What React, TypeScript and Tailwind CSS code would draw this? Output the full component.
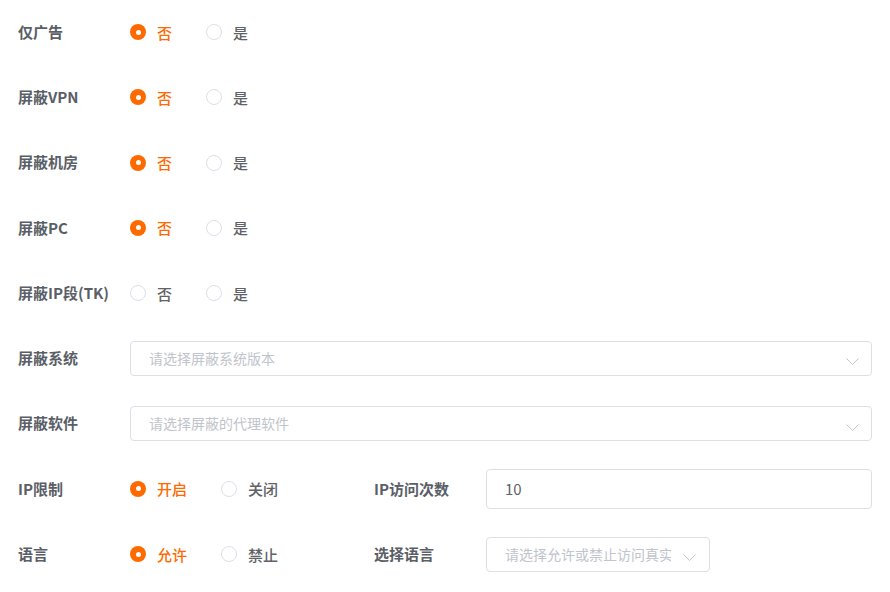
import React from "react";

const font = { fontFamily: '"Noto Sans CJK SC", "Noto Sans", sans-serif' };

function Radio({ label, checked }: { label: string; checked?: boolean }) {
  return (
    <div className="flex items-center mr-[34px]">
      {checked ? (
        <span className="w-[16px] h-[16px] rounded-full bg-[#ff6a00] flex items-center justify-center">
          <span className="w-[5px] h-[5px] rounded-full bg-white" />
        </span>
      ) : (
        <span className="w-[16px] h-[16px] rounded-full border border-[#dcdfe6] bg-white" />
      )}
      <span
        className={`ml-[11px] text-[15px] font-medium leading-none ${checked ? "text-[#ff6a00]" : "text-[#606266]"}`}
      >
        {label}
      </span>
    </div>
  );
}

function Chevron() {
  return (
    <svg width="13" height="7" viewBox="0 0 13 7" fill="none" className="shrink-0 mt-[7px]">
      <path d="M0.5 0.5l6 6 6-6" stroke="#c0c4cc" strokeWidth="1" />
    </svg>
  );
}

function Label({ children }: { children: React.ReactNode }) {
  return (
    <div className="w-[112px] shrink-0 text-[15px] font-bold text-[#5a5e66] whitespace-nowrap">
      {children}
    </div>
  );
}

export default function App() {
  return (
    <div className="bg-white w-[890px] h-[592px] overflow-hidden" style={font}>
      <div className="flex flex-col gap-[25.25px] pt-[12px] pl-[18px] w-[872px]">
        {[
          ["仅广告", true],
          ["屏蔽VPN", true],
          ["屏蔽机房", true],
          ["屏蔽PC", true],
          ["屏蔽IP段(TK)", false],
        ].map(([l, c]) => (
          <div key={l as string} className="flex items-center h-[40px]">
            <Label>{l as string}</Label>
            <Radio label="否" checked={c as boolean} />
            <Radio label="是" />
          </div>
        ))}
        <div className="flex items-center h-[40px]">
          <Label>屏蔽系统</Label>
          <div className="flex-1 h-[35px] border border-[#dcdfe6] rounded-[4px] flex items-center pl-[18px] pr-[12px]">
            <span className="flex-1 text-[14px] text-[#c0c4cc]">请选择屏蔽系统版本</span>
            <Chevron />
          </div>
        </div>
        <div className="flex items-center h-[40px]">
          <Label>屏蔽软件</Label>
          <div className="flex-1 h-[35px] border border-[#dcdfe6] rounded-[4px] flex items-center pl-[18px] pr-[12px]">
            <span className="flex-1 text-[14px] text-[#c0c4cc]">请选择屏蔽的代理软件</span>
            <Chevron />
          </div>
        </div>
        <div className="flex items-center h-[40px]">
          <div className="w-[356px] shrink-0 flex items-center">
            <Label>IP限制</Label>
            <Radio label="开启" checked />
            <Radio label="关闭" />
          </div>
          <Label>IP访问次数</Label>
          <div className="flex-1 h-[40px] border border-[#dcdfe6] rounded-[4px] flex items-center pl-[18px]">
            <span className="text-[15px] text-[#606266]">10</span>
          </div>
        </div>
        <div className="flex items-center h-[40px]">
          <div className="w-[356px] shrink-0 flex items-center">
            <Label>语言</Label>
            <Radio label="允许" checked />
            <Radio label="禁止" />
          </div>
          <Label>选择语言</Label>
          <div className="w-[224px] h-[35px] border border-[#dcdfe6] rounded-[4px] flex items-center pl-[18px] pr-[12px]">
            <span className="w-[166px] overflow-hidden whitespace-nowrap text-[14px] text-[#c0c4cc]">
              请选择允许或禁止访问真实语言
            </span>
            <span className="ml-[12px]">
              <Chevron />
            </span>
          </div>
        </div>
      </div>
    </div>
  );
}
